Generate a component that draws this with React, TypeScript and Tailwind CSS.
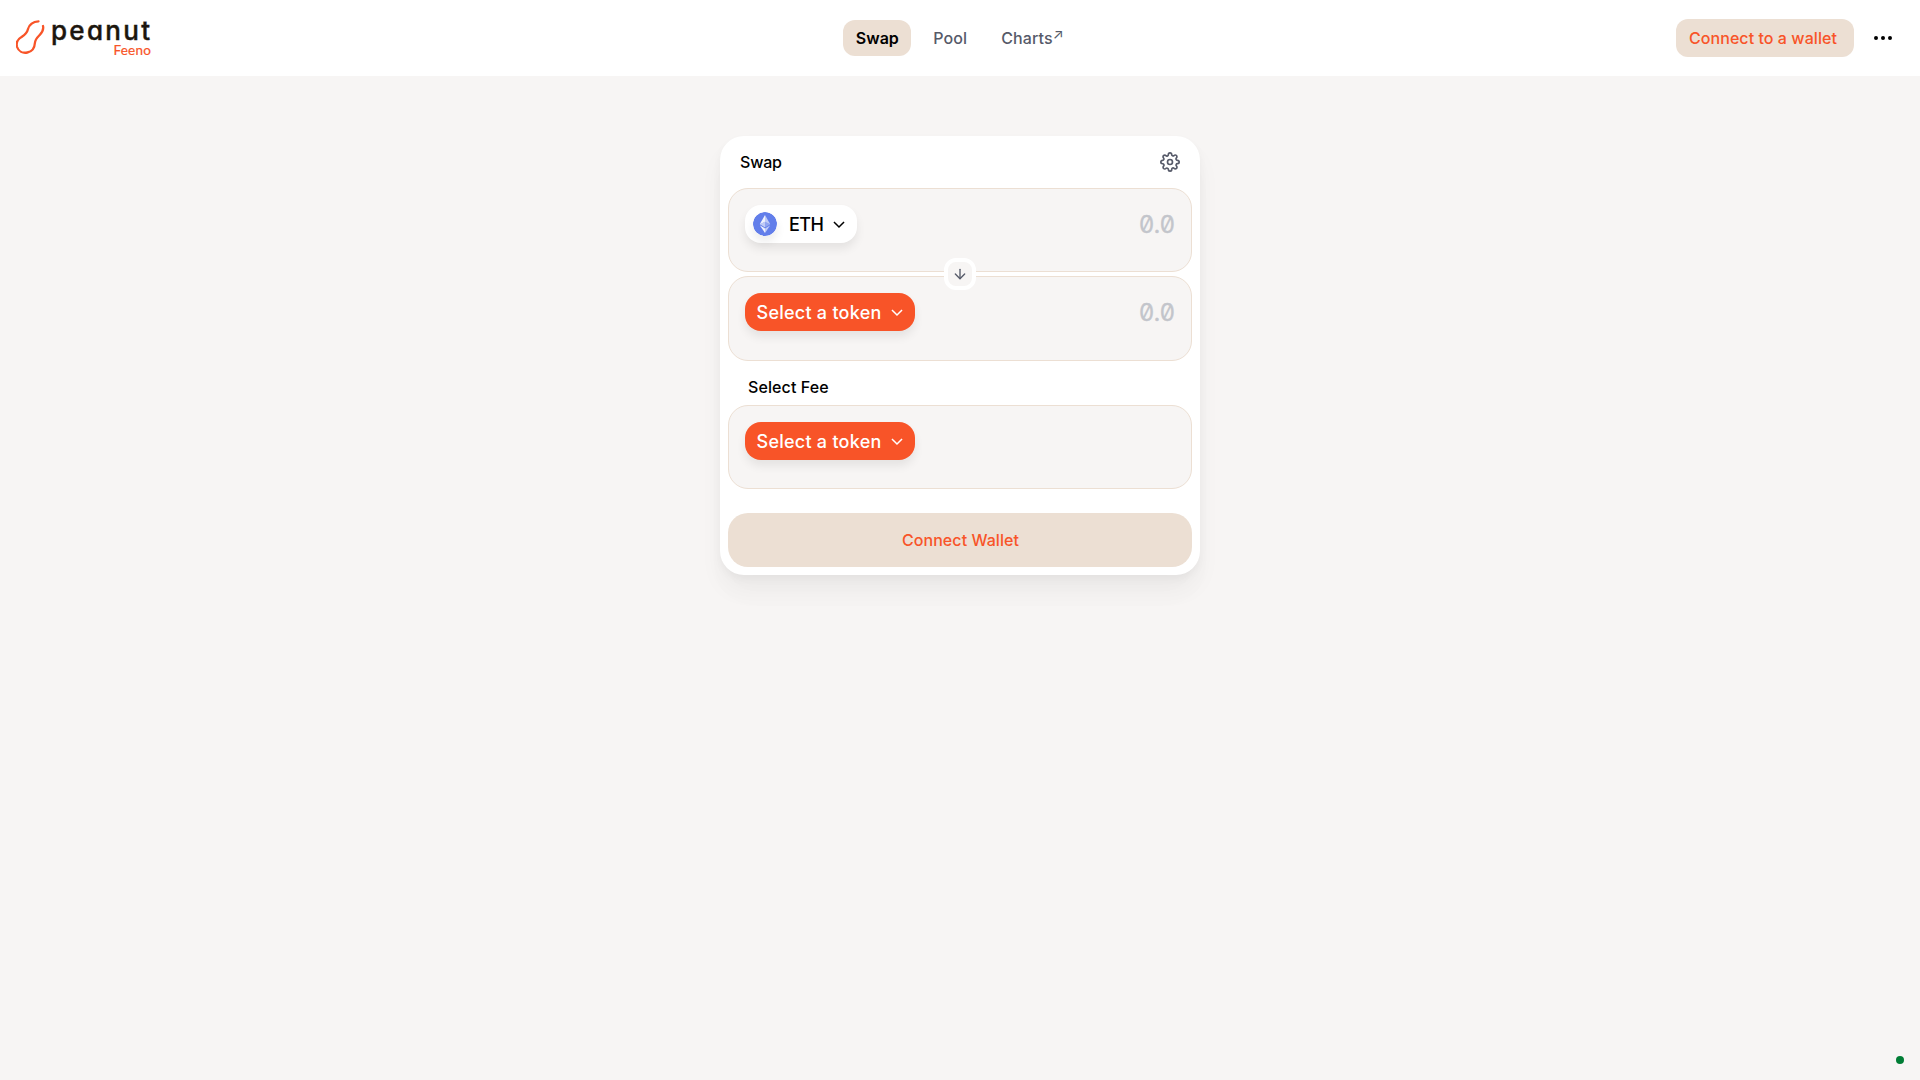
import React from "react";
import { FiArrowDown, FiMoreHorizontal, FiSettings } from "react-icons/fi";

function Logo() {
  return (
    <div className="flex h-10 w-[136px] items-start">
      <svg className="mt-px h-9 w-[30px] shrink-0" viewBox="16 19 30 36" fill="none" stroke="#f85428" strokeWidth="2.3" strokeLinecap="round">
        <path d="M38.5 21.3C33 21.6 29.3 24.5 28 29C27 33.5 24.8 34.8 21.5 37C17.3 39.5 16 43.3 17.1 47C18.6 51.5 22.8 53.4 27.3 52.5C32 51.5 34.6 48 34.8 43.5C35 39.5 36.8 37.8 39.5 35.2C42.6 32 43.9 29.5 43 26" />
      </svg>
      <div className="ml-[5px] w-[101px]">
        <div className="h-[24px] whitespace-nowrap font-['Inter',sans-serif] text-[26px] leading-[25px] font-medium tracking-[2.3px] text-[#1c160e] [font-feature-settings:'cv11'] [-webkit-text-stroke:0.4px_#1c160e]">peanut</div>
        <div className="pr-px text-right font-['Lato',sans-serif] text-[13.5px] leading-4 tracking-[0.2px] text-[#f85428] [-webkit-text-stroke:0.2px_#f85428]">Feeno</div>
      </div>
    </div>
  );
}

function EthIcon() {
  return (
    <svg className="h-6 w-6 rounded-full shadow-[0_6px_10px_rgba(0,0,0,0.075)]" viewBox="0 0 32 32">
      <circle cx="16" cy="16" r="16" fill="#627eea" />
      <g fill="#fff">
        <path fillOpacity=".6" d="M16 4v8.87l7 3.35z" />
        <path fillOpacity=".9" d="M16 4L9 16.22l7-3.35z" />
        <path fillOpacity=".6" d="M16 21.97v6.03L23 17.62z" />
        <path fillOpacity=".9" d="M16 28v-6.03L9 17.62z" />
        <path fillOpacity=".3" d="M16 20.57l7-4.35-7-3.35z" />
        <path fillOpacity=".6" d="M9 16.22l7 4.35v-7.7z" />
      </g>
    </svg>
  );
}

function Chevron({ className }: { className: string }) {
  return (
    <svg className={className} width="12" height="7" viewBox="0 0 12 7" fill="none">
      <path d="M0.97 1L6 5.93L11.03 1" stroke="currentColor" strokeWidth="1.5" />
    </svg>
  );
}

function SelectToken() {
  return (
    <button className="flex h-[38px] w-[170px] items-center rounded-2xl bg-[#f85428] pl-[11.5px] text-lg font-medium text-white shadow-[0_6px_10px_rgba(0,0,0,0.075)]">
      <span className="w-[124.5px] pt-[2px] whitespace-nowrap tracking-[0.25px]">Select a token</span>
      <Chevron className="ml-[10px]" />
    </button>
  );
}

function Panel({ children, amount, className }: { children: React.ReactNode; amount?: boolean; className: string }) {
  return (
    <div className={"flex items-start justify-between rounded-[20px] border border-[#ecdfd3] bg-[#f7f5f4] px-4 pt-4 " + className}>
      {children}
      {amount && <span className="pt-px text-2xl leading-[38px] font-normal text-[#c3c5cb] [font-feature-settings:'zero'] [-webkit-text-stroke:0.3px_#c3c5cb]">0.0</span>}
    </div>
  );
}

export default function App() {
  return (
    <div className="flex h-[1080px] flex-col bg-[#f7f5f4] font-['Inter',sans-serif] text-base text-black">
      <header className="grid h-[76px] grid-cols-3 items-center bg-white px-4">
        <Logo />
        <nav className="flex items-center pl-[198px] font-medium text-[#565a69]">
          <span className="flex h-9 w-[68px] items-center justify-center rounded-xl bg-[#ecdfd3] font-semibold text-black">Swap</span>
          <span className="ml-[22px] tracking-[0.1px]">Pool</span>
          <span className="ml-[34px] flex tracking-[0.1px]">
            Charts<span className="text-[14px] leading-[15px] font-normal">↗</span>
          </span>
        </nav>
        <div className="flex items-center justify-end pr-[3px]">
          <button className="h-[38px] w-[178px] rounded-xl bg-[#ecdfd3] pr-1 font-medium tracking-[0.06px] text-[#f85428]">Connect to a wallet</button>
          <FiMoreHorizontal className="mr-[6px] ml-[17px] h-6 w-6" />
        </div>
      </header>
      <main className="mx-auto mt-[60px] flex h-[439px] w-[480px] flex-col rounded-3xl bg-white px-2 shadow-[0_0_1px_rgba(0,0,0,0.01),0_4px_8px_rgba(0,0,0,0.04),0_16px_24px_rgba(0,0,0,0.04),0_24px_32px_rgba(0,0,0,0.01)]">
        <div className="flex h-[52px] items-center justify-between px-3 font-medium">
          <span className="tracking-[-0.2px]">Swap</span>
          <FiSettings className="h-5 w-5 text-[#565a69]" />
        </div>
        <Panel amount className="h-[84px]">
          <button className="flex h-[38px] w-[112px] items-center rounded-2xl bg-white pl-2 text-lg font-medium shadow-[0_6px_10px_rgba(0,0,0,0.075)]">
            <EthIcon />
            <span className="ml-3 w-[34px] pt-[2px] tracking-[-0.6px]">ETH</span>
            <Chevron className="ml-[10px]" />
          </button>
        </Panel>
        <div className="relative z-10 -my-[14px] flex h-8 w-8 items-center justify-center self-center rounded-xl border-4 border-white bg-[#f7f5f4]">
          <FiArrowDown className="h-4 w-4 shrink-0 text-[#565a69]" />
        </div>
        <Panel amount className="h-[85px]">
          <SelectToken />
        </Panel>
        <div className="flex h-11 items-center pt-2 pl-5 font-medium tracking-[0.1px]">Select Fee</div>
        <Panel className="h-[84px]">
          <SelectToken />
        </Panel>
        <button className="mt-6 h-[54px] rounded-[20px] bg-[#ecdfd3] pl-px font-medium tracking-[0.06px] text-[#f85428]">Connect Wallet</button>
      </main>
      <span className="fixed right-4 bottom-4 h-2 w-2 rounded-full bg-[#007d35]" />
    </div>
  );
}
